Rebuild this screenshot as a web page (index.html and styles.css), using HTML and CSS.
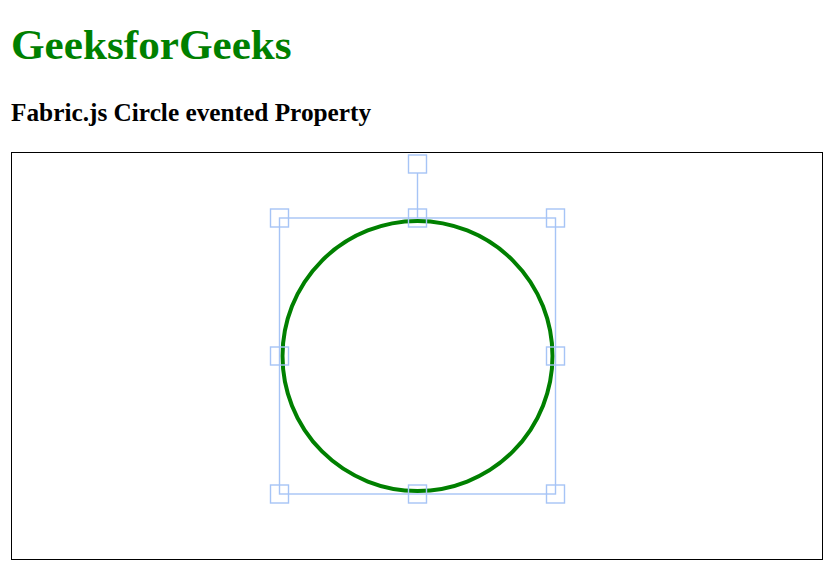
FILE: index.html
```html
<!DOCTYPE html>
<html>
<head>
<meta charset="utf-8">
<title>Fabric.js Circle evented Property</title>
<link rel="stylesheet" href="styles.css">
</head>
<body>
<h1 class="title">GeeksforGeeks</h1>
<h3 class="subtitle">Fabric.js Circle evented Property</h3>
<div class="canvas">
  <svg class="stage" width="810" height="406" viewBox="0 0 810 406">
    <circle cx="405.5" cy="203" r="135" fill="none" stroke="#008000" stroke-width="4"/>
    <g fill="none" stroke="#a6c4f6" stroke-width="1.4">
      <rect x="267.5" y="65" width="276" height="276"/>
      <line x1="405.5" y1="20" x2="405.5" y2="65"/>
      <rect x="396.5" y="2" width="18" height="18"/>
      <rect x="258.5" y="56" width="18" height="18"/>
      <rect x="396.5" y="56" width="18" height="18"/>
      <rect x="534.5" y="56" width="18" height="18"/>
      <rect x="258.5" y="194" width="18" height="18"/>
      <rect x="534.5" y="194" width="18" height="18"/>
      <rect x="258.5" y="332" width="18" height="18"/>
      <rect x="396.5" y="332" width="18" height="18"/>
      <rect x="534.5" y="332" width="18" height="18"/>
    </g>
  </svg>
</div>
</body>
</html>
```

FILE: styles.css
```css
body {
  margin: 0;
  padding: 0 11px;
  font-family: "Liberation Serif", "Times New Roman", serif;
  background: #fff;
}

.title {
  font-size: 43.2px;
  line-height: 48px;
  font-weight: bold;
  color: #008000;
  margin: 21px 0 0;
}

.subtitle {
  font-size: 25.3px;
  line-height: 28px;
  font-weight: bold;
  color: #000;
  margin: 29px 0 26px;
}

.canvas {
  width: 810px;
  height: 406px;
  border: 1px solid #000;
}

.stage {
  display: block;
}
```
